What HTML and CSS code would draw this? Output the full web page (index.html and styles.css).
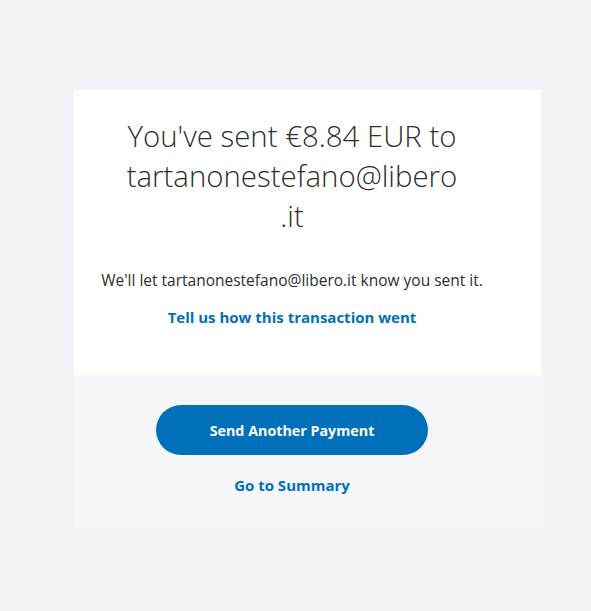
FILE: index.html
```html
<!DOCTYPE html>
<html lang="en">
<head>
<meta charset="utf-8">
<title>Payment sent</title>
<link rel="stylesheet" href="styles.css">
</head>
<body>
<main class="page">
  <section class="card">
    <div class="card-top">
      <h1 class="title"><span class="line">You've sent €8.84 EUR to</span><span class="line">tartanonestefano@libero</span><span class="line">.it</span></h1>
      <p class="note">We'll let tartanonestefano@libero.it know you sent it.</p>
      <a class="link" href="#">Tell us how this transaction went</a>
    </div>
    <div class="card-bottom">
      <a class="btn" href="#">Send Another Payment</a>
      <a class="link" href="#">Go to Summary</a>
    </div>
  </section>
</main>
</body>
</html>
```
FILE: styles.css
```css
html, body {
  margin: 0;
  padding: 0;
}
body {
  background: #f2f3f7;
  font-family: "Open Sans", "Liberation Sans", sans-serif;
  color: #2c2e2f;
}
.page {
  padding: 90px 0 0 74px;
}
.card {
  display: flex;
  flex-direction: column;
  align-items: flex-start;
}
.card-top {
  width: 436px;
  padding: 26px 31px 48px 0;
  background: #ffffff;
  display: flex;
  flex-direction: column;
  align-items: center;
}
.title {
  margin: 0;
  font-size: 29.4px;
  line-height: 40px;
  font-weight: 300;
  color: #2c2e2f;
  text-align: center;
  display: flex;
  flex-direction: column;
  align-items: center;
}
.line {
  display: block;
}
.note {
  margin: 34px 0 0;
  font-size: 15.5px;
  line-height: 20px;
}
.link {
  margin-top: 17px;
  font-size: 15px;
  line-height: 20px;
  font-weight: 700;
  color: #0070ba;
  text-decoration: none;
}
.card-bottom {
  width: 436px;
  padding: 30px 34px 34px 0;
  background: #f5f6fa;
  display: flex;
  flex-direction: column;
  align-items: center;
}
.card-bottom .link {
  margin-top: 20px;
}
.btn {
  width: 272px;
  height: 50px;
  border-radius: 25px;
  background: #0070ba;
  color: #ffffff;
  font-size: 14.3px;
  font-weight: 700;
  display: flex;
  align-items: center;
  justify-content: center;
  text-decoration: none;
}
```
